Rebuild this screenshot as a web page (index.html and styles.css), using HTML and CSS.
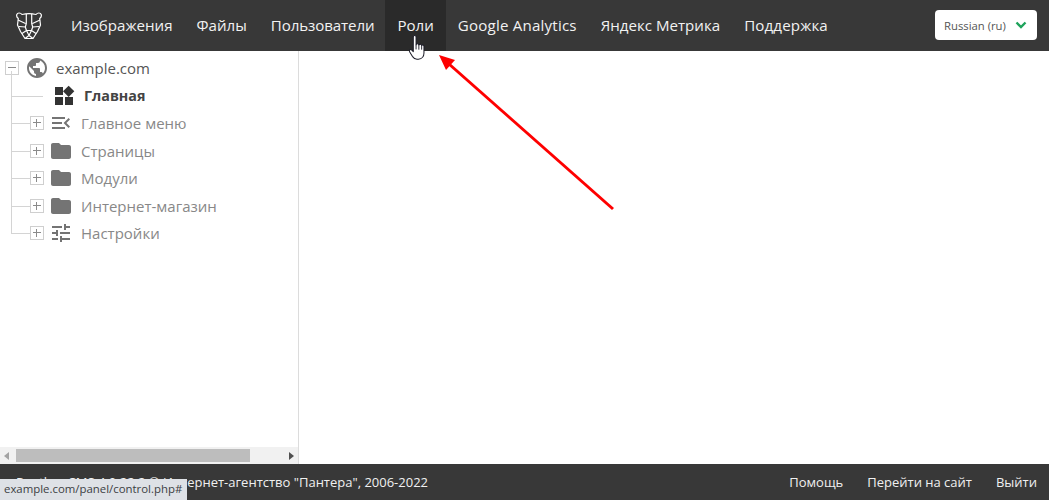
FILE: index.html
```html
<!DOCTYPE html>
<html lang="ru">
<head>
<meta charset="utf-8">
<title>Панель</title>
<link rel="stylesheet" href="styles.css">
</head>
<body>
<div class="app">
  <header class="topbar">
    <svg class="logo" viewBox="0 0 26 27" fill="none" stroke="#fff" stroke-width="1.200" stroke-linejoin="round">
      <path d="M6 2.500C4.500 .5 1.500 .5 .8 2.500 .3 4 1 5.500 2.300 6.500L1.500 13l3 6.500 4.500 7h8l4.500-7 3-6.500-.8-6.500C25 5.500 25.700 4 25.200 2.500 24.500 .5 21.500 .5 20 2.500 15 1.300 11 1.300 6 2.500z"/>
      <path d="M10.300 2v9.500l-1 3.500M15.700 2v9.500l1 3.500M2 8l7.500 3.500M24 8l-7.500 3.500M3 14.500l6.300.5 1.200 3.500M23 14.500l-6.300.5-1.200 3.500M10.500 18.500h5L13 23.500zM9 26.500l4-3 4 3M6 21.500l4.500-3M20 21.500l-4.500-3"/>
    </svg>
    <nav class="menu">
      <a class="menu-item">Изображения</a>
      <a class="menu-item">Файлы</a>
      <a class="menu-item narrow">Пользователи</a>
      <a class="menu-item active">Роли</a>
      <a class="menu-item latin">Google Analytics</a>
      <a class="menu-item">Яндекс Метрика</a>
      <a class="menu-item wide">Поддержка</a>
    </nav>
    <div class="lang">
      <span>Russian (ru)</span>
      <svg class="chev" viewBox="0 0 12 8" fill="none" stroke="#1fa35c" stroke-width="2.400"><path d="M1.500 1.500 6 6l4.500-4.500"/></svg>
    </div>
  </header>

  <main class="body">
    <aside class="side">
      <div class="tree">
        <div class="root-row">
          <span class="box"></span>
          <svg class="ic globe" viewBox="0 0 24 24"><path d="M12 2C6.480 2 2 6.480 2 12s4.480 10 10 10 10-4.480 10-10S17.520 2 12 2zm-1 17.930c-3.950-.490-7-3.850-7-7.930 0-.620.080-1.210.210-1.790L9 15v1c0 1.100.900 2 2 2v1.930zm6.900-2.540c-.260-.810-1-1.390-1.900-1.390h-1v-3c0-.550-.450-1-1-1H8v-2h2c.550 0 1-.450 1-1V7h2c1.100 0 2-.900 2-2v-.410c2.930 1.190 5 4.060 5 7.410 0 2.080-.800 3.970-2.100 5.390z"/></svg>
          <span class="root-label">example.com</span>
        </div>
        <ul class="children">
          <li class="row home">
            <svg class="ic" viewBox="0 0 24 24"><path d="M13 13v8h8v-8h-8zM3 21h8v-8H3v8zM3 3v8h8V3H3zm13.660-1.310L11 7.340 16.660 13l5.660-5.660-5.660-5.650z"/></svg>
            <span class="home-label">Главная</span>
          </li>
          <li class="row">
            <span class="box plus"></span>
            <svg class="ic" viewBox="0 0 24 24"><path d="M3 18h13v-2H3v2zm0-5h10v-2H3v2zm0-7v2h13V6H3zm18 9.590L17.420 12 21 8.410 19.590 7l-5 5 5 5L21 15.590z"/></svg>
            <span>Главное меню</span>
          </li>
          <li class="row">
            <span class="box plus"></span>
            <svg class="ic" viewBox="0 0 24 24"><path d="M10 4H4c-1.100 0-1.990.900-1.990 2L2 18c0 1.100.900 2 2 2h16c1.100 0 2-.900 2-2V8c0-1.100-.900-2-2-2h-8l-2-2z"/></svg>
            <span>Страницы</span>
          </li>
          <li class="row">
            <span class="box plus"></span>
            <svg class="ic" viewBox="0 0 24 24"><path d="M10 4H4c-1.100 0-1.990.900-1.990 2L2 18c0 1.100.900 2 2 2h16c1.100 0 2-.900 2-2V8c0-1.100-.900-2-2-2h-8l-2-2z"/></svg>
            <span>Модули</span>
          </li>
          <li class="row">
            <span class="box plus"></span>
            <svg class="ic" viewBox="0 0 24 24"><path d="M10 4H4c-1.100 0-1.990.900-1.990 2L2 18c0 1.100.900 2 2 2h16c1.100 0 2-.900 2-2V8c0-1.100-.900-2-2-2h-8l-2-2z"/></svg>
            <span>Интернет-магазин</span>
          </li>
          <li class="row">
            <span class="box plus"></span>
            <svg class="ic" viewBox="0 0 24 24"><path d="M3 17v2h6v-2H3zM3 5v2h10V5H3zm10 16v-2h8v-2h-8v-2h-2v6h2zM7 9v2H3v2h4v2h2V9H7zm14 4v-2H11v2h10zm-6-4h2V7h4V5h-4V3h-2v6z"/></svg>
            <span>Настройки</span>
          </li>
        </ul>
      </div>
      <div class="hscroll">
        <span class="arrow-left"></span>
        <span class="track"><span class="thumb"></span></span>
        <span class="arrow-right"></span>
      </div>
    </aside>
    <section class="content"></section>
  </main>

  <footer class="footer">
    <div class="copy">Panther CMS 4.0.22.2 © Интернет-агентство "Пантера", 2006-2022</div>
    <div class="links">
      <a>Помощь</a>
      <a>Перейти на сайт</a>
      <a>Выйти</a>
    </div>
  </footer>
</div>

<div class="status">example.com/panel/control.php#</div>

<svg class="annot" viewBox="0 0 1050 500" fill="none">
  <path d="M613 209 449 64" stroke="#fe0000" stroke-width="3"/>
  <path d="M439 55 455 60 446 70z" fill="#fe0000"/>
</svg>

<svg class="cursor" viewBox="0 0 18 28">
  <path d="M5 2c0-1.800 3-1.800 3 0v8.500c.500-1.500 2.800-1.300 3 .300.500-1.300 2.700-1.100 3 .500.600-1 2.500-.800 2.500 1v7c0 3.500-2 6.700-6 6.700H9c-2.500 0-3.800-1.200-5-3l-3-5c-1-1.800 1.200-3.200 2.500-1.700L5 18z" fill="#fff" stroke="#1c1c28" stroke-width="1.100" stroke-linejoin="round"/>
  <path d="M8 10.500v5M11 10.800v5M14 11.300v4.500" stroke="#1c1c28" stroke-width="1"/>
</svg>
</body>
</html>
```

FILE: styles.css
```css
* { box-sizing: border-box; }
html, body { margin: 0; height: 100%; overflow: hidden; background: #fff; }
body { font-family: "Open Sans", "Liberation Sans", sans-serif; color: #444; padding-right: 1px; }
ul { list-style: none; margin: 0; padding: 0; }

.app { display: flex; flex-direction: column; height: 500px; }

.topbar { height: 51px; flex: none; background: #383838; display: flex; align-items: center; padding-left: 16px; padding-right: 12px; }
.logo { width: 26px; height: 27px; flex: none; }
.menu { display: flex; height: 100%; margin-left: 17px; }
.menu-item { display: flex; align-items: center; padding: 0 12px 2px; font-size: 15.100px; color: #f2f2f2; white-space: nowrap; }
.menu-item.narrow { letter-spacing: -.1px; }
.menu-item.active { background: #2a2a2a; margin-left: -1px; }
.menu-item.latin { letter-spacing: .2px; margin-left: 0; }
.menu-item.wide { letter-spacing: .15px; }
.lang { margin-left: auto; margin-top: -1px; width: 102px; height: 30px; background: #fff; border-radius: 4px; display: flex; align-items: center; justify-content: space-between; padding: 0 10px 0 9px; font-size: 11.300px; color: #555; }
.chev { width: 12px; height: 8px; }

.body { flex: 1; display: flex; min-height: 0; }
.side { width: 299px; border-right: 1px solid #dcdcdc; display: flex; flex-direction: column; }
.tree { flex: 1; padding: 3px 0 0 5px; font-size: 15px; color: #888; }
.root-row { display: flex; align-items: center; height: 28.300px; color: #555; }
.globe { margin-left: 6px; fill: #383838; }
.root-label { margin-left: 7px; }
.box { position: relative; width: 14px; height: 14px; border: 1px solid #cfcfcf; background: #fff; flex: none; }
.box::before { content: ""; position: absolute; left: 2px; right: 2px; top: 5px; height: 1px; background: #8a8a8a; }
.box.plus::after { content: ""; position: absolute; top: 2px; bottom: 2px; left: 5px; width: 1px; background: #8a8a8a; }
.ic { width: 24px; height: 24px; fill: #747474; flex: none; }

.children { margin-left: 6px; position: relative; }
.children::before { content: ""; position: absolute; left: 0; top: -11px; bottom: 13px; width: 1px; background: #d4d4d4; }
.row { position: relative; display: flex; align-items: center; height: 27.400px; padding-left: 19px; }
.row::before { content: ""; position: absolute; left: 0; top: 50%; width: 19px; height: 1px; background: #d4d4d4; }
.row .box { margin-right: 5px; }
.row .ic { margin-right: 8px; }
.row.home { padding-left: 41px; }
.row.home::before { width: 32px; }
.row.home .ic { fill: #333; }
.home-label { font-weight: 700; color: #444; font-size: 14.300px; }

.hscroll { height: 17px; flex: none; background: #f1f1f1; display: flex; align-items: center; }
.track { flex: 1; height: 13px; padding: 0 32px 0 0; }
.thumb { display: block; height: 13px; width: 234px; background: #bdbdbd; }
.arrow-left { width: 0; height: 0; margin: 0 7px 0 4px; border: 4px solid transparent; border-left: 0; border-right: 5px solid #a3a3a3; }
.arrow-right { width: 0; height: 0; margin: 0 4px 0 0; border: 4px solid transparent; border-right: 0; border-left: 5px solid #505050; }
.content { flex: 1; background: #fff; }

.footer { height: 36px; flex: none; background: #383838; color: #f0f0f0; font-size: 13px; display: flex; align-items: center; justify-content: space-between; padding: 0 12px 0 16px; }
.links { display: flex; gap: 24px; }

.status { position: fixed; left: 0; bottom: 0; height: 21px; width: 187px; background: #dee1e6; color: #3c4043; font-size: 11.400px; line-height: 20px; padding-left: 4px; white-space: nowrap; }
.annot { position: fixed; left: 0; top: 0; width: 1050px; height: 500px; pointer-events: none; }
.cursor { position: fixed; left: 408px; top: 35px; width: 18px; height: 26px; }
```
